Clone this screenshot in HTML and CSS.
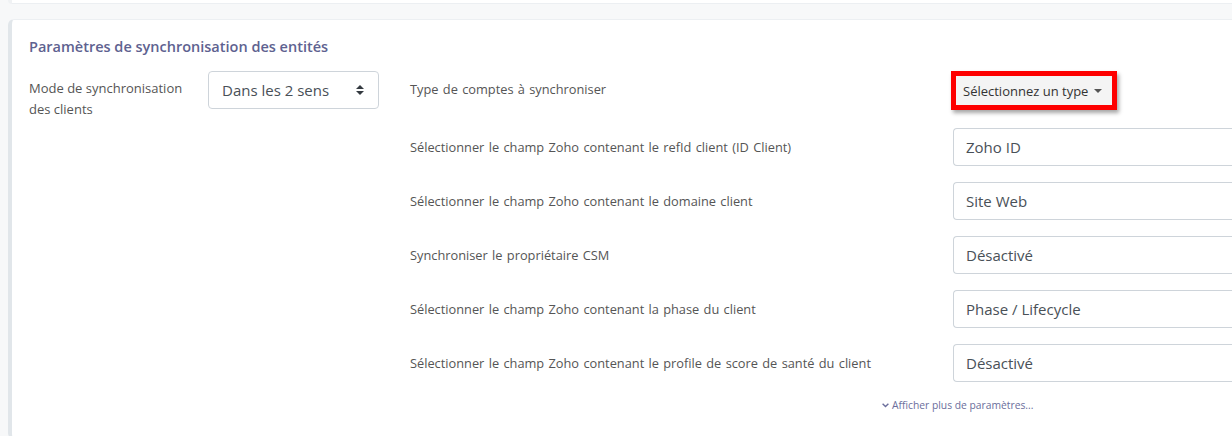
FILE: index.html
```html
<!DOCTYPE html>
<html lang="fr">
<head>
<meta charset="utf-8">
<title>Paramètres</title>
<link rel="stylesheet" href="styles.css">
</head>
<body>
<div class="page">
  <div class="card card-top"></div>
  <div class="card card-main">
    <h2 class="card-title">Paramètres de synchronisation des entités</h2>
    <div class="card-body">
      <div class="left">
        <label class="left-label">Mode de synchronisation des clients</label>
        <div class="select">
          <span>Dans les 2 sens</span>
          <svg class="updown" width="8" height="10" viewBox="0 0 8 10"><path d="M4 0 L8 4 H0 Z M0 6 H8 L4 10 Z" fill="#343a40"/></svg>
        </div>
      </div>
      <div class="right">
        <div class="row row-first">
          <div class="label label-first">Type de comptes à synchroniser</div>
          <div class="hl">
            <div class="btn">Sélectionnez un type <span class="caret"></span></div>
          </div>
        </div>
        <div class="row">
          <div class="label">Sélectionner le champ Zoho contenant le refId client (ID Client)</div>
          <div class="input">Zoho ID</div>
        </div>
        <div class="row">
          <div class="label">Sélectionner le champ Zoho contenant le domaine client</div>
          <div class="input">Site Web</div>
        </div>
        <div class="row">
          <div class="label">Synchroniser le propriétaire CSM</div>
          <div class="input">Désactivé</div>
        </div>
        <div class="row">
          <div class="label">Sélectionner le champ Zoho contenant la phase du client</div>
          <div class="input">Phase / Lifecycle</div>
        </div>
        <div class="row">
          <div class="label">Sélectionner le champ Zoho contenant le profile de score de santé du client</div>
          <div class="input">Désactivé</div>
        </div>
        <div class="more">
          <svg width="7" height="5" viewBox="0 0 7 5"><path d="M0.6 0.8 L3.5 3.6 L6.4 0.8" fill="none" stroke="#6b6e9c" stroke-width="1.4"/></svg>
          Afficher plus de paramètres...
        </div>
      </div>
    </div>
  </div>
</div>
</body>
</html>
```
FILE: styles.css
```css
html, body {
  margin: 0;
  padding: 0;
  overflow: hidden;
  background: #f7f8f9;
}
body {
  font-family: "Open Sans", "Noto Sans", sans-serif;
  color: #495057;
}
.page {
  width: 1232px;
  height: 436px;
  overflow: hidden;
}
.card {
  background: #fff;
  border-left: 4px solid #e1e6ea;
  border-top: 1px solid #eceff2;
  border-radius: 6px 0 0 6px;
}
.card-top {
  height: 3px;
  margin-left: 8px;
  border-top: none;
  border-bottom: 1px solid #eceff2;
  border-left: 4px solid #f0f2f4;
  border-radius: 0 0 0 6px;
}
.card-main {
  margin-top: 15px;
  margin-left: 8px;
  height: 420px;
  box-sizing: border-box;
  padding: 17px 0 0 17px;
  overflow: hidden;
}
.card-title {
  margin: 0 0 14px 0;
  font-size: 14.5px;
  font-weight: 600;
  color: #5e6290;
  line-height: 20px;
}
.card-body {
  display: flex;
}
.left {
  display: flex;
  width: 381px;
  flex: none;
}
.left-label {
  width: 179px;
  box-sizing: border-box;
  padding-right: 12px;
  flex: none;
  font-size: 13px;
  line-height: 21px;
  padding-top: 7px;
  color: #555;
}
.select {
  width: 171px;
  height: 38px;
  box-sizing: border-box;
  border: 1px solid #ced4da;
  border-radius: 4px;
  display: flex;
  align-items: center;
  justify-content: space-between;
  padding: 0 14px 0 13px;
  font-size: 15px;
  color: #495057;
}
.right {
  flex: 1;
  min-width: 0;
}
.row {
  display: flex;
  align-items: center;
  margin-bottom: 16px;
}
.row-first {
  margin-bottom: 18px;
}
.label {
  width: 543px;
  flex: none;
  font-size: 12.8px;
  word-spacing: 1px;
  color: #555;
}
.label-first {
  margin-top: -3px;
}
.hl {
  border: 5px solid #fe0000;
  margin-left: -2px;
  box-shadow: 2px 3px 4px rgba(0,0,0,0.35);
  height: 29px;
  background: #f4f4f4;
}
.btn {
  height: 29px;
  display: flex;
  align-items: center;
  padding: 0 10px 0 7px;
  font-size: 13px;
  color: #333;
}
.caret {
  display: inline-block;
  width: 0;
  height: 0;
  margin-left: 6px;
  border-left: 4px solid transparent;
  border-right: 4px solid transparent;
  border-top: 4px solid #555;
}
.input {
  flex: 1;
  min-width: 300px;
  height: 38px;
  box-sizing: border-box;
  border: 1px solid #ced4da;
  border-right: none;
  border-radius: 4px 0 0 4px;
  display: flex;
  align-items: center;
  padding-left: 12px;
  font-size: 15px;
  color: #495057;
}
.more {
  margin-left: 472px;
  margin-top: 8px;
  font-size: 10.3px;
  color: #6b6e9c;
  display: flex;
  align-items: center;
  gap: 3px;
}
```
